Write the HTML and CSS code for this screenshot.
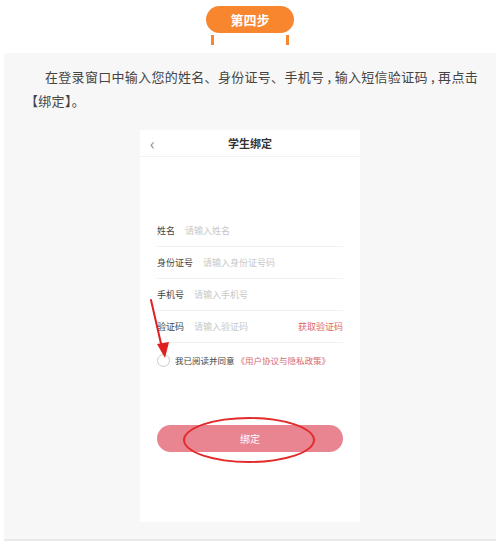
FILE: index.html
```html
<!DOCTYPE html>
<html>
  <head>
    <title>第四步</title>
    <link rel="stylesheet" href="styles.css">
  </head>
  <body>
    <div class="step-head">
      <div class="step-pill">第四步</div>
      <div class="step-legs"><span></span><span></span></div>
    </div>

    <div class="panel">
      <p class="intro">
        在登录窗口中输入您的姓名、身份证号、手机号 , 输入短信验证码 , 再点击【绑定】。
      </p>

      <div class="phone">
        <div class="phone-bar">
          <span class="back">‹</span>
          <span class="title">学生绑定</span>
        </div>

        <div class="form">
          <div class="row"><span class="label">姓名</span><span class="hint">请输入姓名</span></div>
          <div class="row"><span class="label">身份证号</span><span class="hint">请输入身份证号码</span></div>
          <div class="row"><span class="label">手机号</span><span class="hint">请输入手机号</span></div>
          <div class="row">
            <span class="label">验证码</span><span class="hint">请输入验证码</span>
            <span class="get-code">获取验证码</span>
          </div>

          <div class="agree">
            <span class="radio"></span>
            <span>我已阅读并同意</span>
            <span class="link">《用户协议与隐私政策》</span>
          </div>

          <div class="bind-wrap">
            <div class="bind">绑定</div>
            <div class="ring"></div>
          </div>
        </div>

        <svg class="arrow" width="24" height="64" viewBox="0 0 24 64">
          <path d="M2 2 L13 50" stroke="#e02020" stroke-width="2" fill="none" stroke-linecap="round"/>
          <path d="M8 46 L20 44 L16 60 Z" fill="#e02020"/>
        </svg>
      </div>
    </div>
  </body>
</html>
```

FILE: styles.css
```css
body {
  margin: 0;
  padding: 0;
  width: 500px;
  height: 543px;
  background: #fff;
  font-family: "Noto Sans CJK SC", "Liberation Sans", sans-serif;
  overflow: hidden;
}

.step-head {
  display: flex;
  flex-direction: column;
  align-items: center;
  padding-top: 6px;
  height: 47px;
  box-sizing: border-box;
}

.step-pill {
  width: 88px;
  height: 27px;
  line-height: 27px;
  background: #f7862f;
  border-radius: 14px;
  color: #fff;
  font-size: 13px;
  font-weight: bold;
  text-align: center;
}

.step-legs {
  width: 78px;
  display: flex;
  justify-content: space-between;
  margin-top: 2px;
}

.step-legs span {
  width: 3px;
  height: 10px;
  background: #f7862f;
}

.panel {
  margin: 6px 4px 0;
  height: 488px;
  background: #f7f7f7;
  border-bottom: 2px solid #e9e9e9;
  box-sizing: border-box;
  padding-top: 12px;
}

.intro {
  margin: 0;
  padding: 0 18px 0 21px;
  text-indent: 20px;
  font-size: 13px;
  line-height: 24px;
  color: #444;
  letter-spacing: 0.3px;
}

.phone {
  position: relative;
  width: 220px;
  height: 392px;
  margin: 17px auto 0;
  background: #fff;
}

.phone-bar {
  height: 26px;
  border-bottom: 1px solid #f2f2f2;
  display: flex;
  align-items: center;
  justify-content: center;
  position: relative;
}

.back {
  position: absolute;
  left: 10px;
  top: 1px;
  font-size: 16px;
  color: #888;
}

.title {
  font-size: 11px;
  font-weight: bold;
  color: #333;
}

.form {
  padding: 58px 17px 0;
}

.row {
  height: 32px;
  border-bottom: 1px solid #f1f1f1;
  display: flex;
  align-items: center;
  font-size: 9px;
  box-sizing: border-box;
}

.label {
  color: #444;
  margin-right: 10px;
}

.hint {
  color: #c8c8c8;
  flex: 1;
}

.get-code {
  color: #d9686f;
}

.agree {
  height: 34px;
  display: flex;
  align-items: center;
  font-size: 8.5px;
  color: #444;
}

.radio {
  width: 11px;
  height: 11px;
  border: 1px solid #ccc;
  border-radius: 50%;
  margin-right: 5px;
}

.link {
  color: #d9686f;
  margin-left: 2px;
}

.bind-wrap {
  position: relative;
  margin-top: 48px;
}

.bind {
  height: 27px;
  line-height: 27px;
  border-radius: 14px;
  background: #e98590;
  color: #fff;
  font-size: 10px;
  text-align: center;
}

.ring {
  position: absolute;
  left: 26px;
  top: -8px;
  width: 128px;
  height: 42px;
  border: 2px solid #e22a2a;
  border-radius: 50%;
}

.arrow {
  position: absolute;
  left: 9px;
  top: 168px;
}
```
